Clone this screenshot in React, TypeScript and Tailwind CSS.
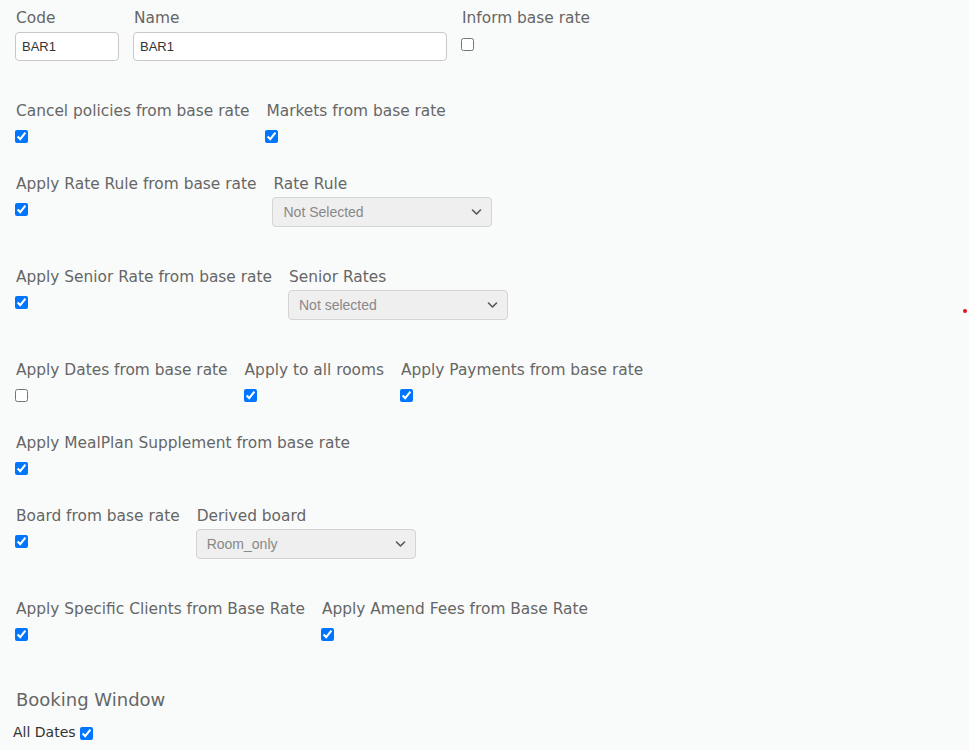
import React from "react";

const labelCls =
  "block h-5 leading-[22px] pl-px text-[15.4px] text-[#666] whitespace-nowrap font-['DejaVu_Sans',sans-serif]";

function Check({ checked }: { checked?: boolean }) {
  return (
    <input
      type="checkbox"
      defaultChecked={checked}
      className="block m-0 w-[13px] h-[13px] mt-[10px]"
    />
  );
}

function Select({ value }: { value: string }) {
  return (
    <div className="mt-1 h-[30px] w-[220px] flex items-center justify-between rounded-[4px] border border-[#d4d4d4] bg-[#efefef] pl-[10px] pr-[9px] text-[14px] text-[#888] font-['Liberation_Sans',Arial,sans-serif]">
      <span>{value}</span>
      <svg width="11" height="8" viewBox="0 0 11 8" fill="none">
        <path d="M1.5 2 L5.5 6 L9.5 2" stroke="#555" strokeWidth="1.6" strokeLinecap="round" strokeLinejoin="round" />
      </svg>
    </div>
  );
}

function Field({ label, children }: { label: string; children: React.ReactNode }) {
  return (
    <div className="flex flex-col items-start">
      <span className={labelCls}>{label}</span>
      {children}
    </div>
  );
}

export default function App() {
  return (
    <div className="relative min-h-[750px] w-full bg-[#f9fbfa] pl-[15px] pt-[7px]">
      {/* Row 1 */}
      <div className="flex items-start gap-[14px] mb-[39px]">
        <Field label="Code">
          <input
            defaultValue="BAR1"
            className="mt-[5px] h-[29px] w-[104px] rounded-[4px] border border-[#c8c8c8] bg-white px-[6px] text-[13px] text-[#333] font-['Liberation_Sans',Arial,sans-serif] outline-none"
          />
        </Field>
        <Field label="Name">
          <input
            defaultValue="BAR1"
            className="mt-[5px] h-[29px] w-[314px] rounded-[4px] border border-[#c8c8c8] bg-white px-[6px] text-[13px] text-[#333] font-['Liberation_Sans',Arial,sans-serif] outline-none"
          />
        </Field>
        <div className="flex flex-col items-start">
          <span className={labelCls}>Inform base rate</span>
          <input type="checkbox" className="block m-0 w-[13px] h-[13px] mt-[11px]" />
        </div>
      </div>

      {/* Row 2 */}
      <div className="flex items-start gap-[16px] mb-[30px]">
        <Field label="Cancel policies from base rate">
          <Check checked />
        </Field>
        <Field label="Markets from base rate">
          <Check checked />
        </Field>
      </div>

      {/* Row 3 */}
      <div className="flex items-start gap-[16px] mb-[39px]">
        <Field label="Apply Rate Rule from base rate">
          <Check checked />
        </Field>
        <Field label="Rate Rule">
          <Select value="Not Selected" />
        </Field>
      </div>

      {/* Row 4 */}
      <div className="flex items-start gap-[16px] mb-[39px]">
        <Field label="Apply Senior Rate from base rate">
          <Check checked />
        </Field>
        <Field label="Senior Rates">
          <Select value="Not selected" />
        </Field>
      </div>

      {/* Row 5 */}
      <div className="flex items-start gap-[16px] mb-[30px]">
        <Field label="Apply Dates from base rate">
          <Check />
        </Field>
        <Field label="Apply to all rooms">
          <Check checked />
        </Field>
        <Field label="Apply Payments from base rate">
          <Check checked />
        </Field>
      </div>

      {/* Row 6 */}
      <div className="flex items-start gap-[16px] mb-[30px]">
        <Field label="Apply MealPlan Supplement from base rate">
          <Check checked />
        </Field>
      </div>

      {/* Row 7 */}
      <div className="flex items-start gap-[16px] mb-[39px]">
        <Field label="Board from base rate">
          <Check checked />
        </Field>
        <Field label="Derived board">
          <Select value="Room_only" />
        </Field>
      </div>

      {/* Row 8 */}
      <div className="flex items-start gap-[16px] mb-[46px]">
        <Field label="Apply Specific Clients from Base Rate">
          <Check checked />
        </Field>
        <Field label="Apply Amend Fees from Base Rate">
          <Check checked />
        </Field>
      </div>

      <div className="h-6 leading-[26px] text-[18px] text-[#666] font-['DejaVu_Sans',sans-serif] pl-[1px]">
        Booking Window
      </div>
      <div className="mt-[11px] -ml-[2px] flex items-center gap-[4px] h-5 text-[14px] text-[#333] font-['DejaVu_Sans',sans-serif]">
        <span>All Dates</span>
        <input type="checkbox" defaultChecked className="block m-0 w-[13px] h-[13px] mt-[2px]" />
      </div>

      <div className="absolute left-[963px] top-[309px] h-[4px] w-[4px] rounded-full bg-[#e4141b]" />
    </div>
  );
}
